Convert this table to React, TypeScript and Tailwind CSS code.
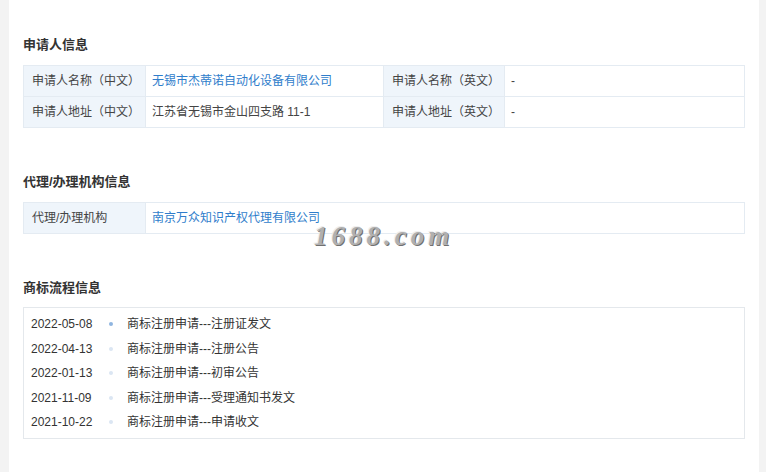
const font = '"Liberation Sans", "Noto Sans CJK SC", sans-serif';

const timeline = [
  { date: '2022-05-08', text: '商标注册申请---注册证发文', active: true },
  { date: '2022-04-13', text: '商标注册申请---注册公告' },
  { date: '2022-01-13', text: '商标注册申请---初审公告' },
  { date: '2021-11-09', text: '商标注册申请---受理通知书发文' },
  { date: '2021-10-22', text: '商标注册申请---申请收文' },
];

const SectionTitle = ({ children }: { children: React.ReactNode }) => (
  <h3 className="h-[20px] leading-[20px] text-[13px] font-bold text-[#333]">{children}</h3>
);

const Label = ({ children }: { children: React.ReactNode }) => (
  <td className="h-[31px] border border-[#e4ebf2] bg-[#eff5fb] pl-[8px] text-[#444]">{children}</td>
);

const Value = ({ children, link }: { children: React.ReactNode; link?: boolean }) => (
  <td className={`h-[31px] border border-[#e4ebf2] pl-[6px] ${link ? 'text-[#2f7dcb]' : 'text-[#444]'}`}>
    {children}
  </td>
);

const App = () => {
  return (
    <div className="flex h-[472px] w-[766px] bg-[#f3f3f3] pl-[9px] pr-[7px]" style={{ fontFamily: font }}>
      <div className="relative flex-1 bg-white px-[14px] pt-[35px] text-[12px]">
        {/* 申请人信息 */}
        <SectionTitle>申请人信息</SectionTitle>
        <table className="mt-[10px] w-full table-fixed border-collapse">
          <colgroup>
            <col className="w-[122px]" />
            <col className="w-[238px]" />
            <col className="w-[121px]" />
            <col />
          </colgroup>
          <tbody>
            <tr>
              <Label>申请人名称（中文）</Label>
              <Value link>无锡市杰蒂诺自动化设备有限公司</Value>
              <Label>申请人名称（英文）</Label>
              <Value>-</Value>
            </tr>
            <tr>
              <Label>申请人地址（中文）</Label>
              <Value>江苏省无锡市金山四支路 11-1</Value>
              <Label>申请人地址（英文）</Label>
              <Value>-</Value>
            </tr>
          </tbody>
        </table>

        {/* 代理/办理机构信息 */}
        <div className="mt-[44px]">
          <SectionTitle>代理/办理机构信息</SectionTitle>
        </div>
        <table className="mt-[10px] w-full table-fixed border-collapse">
          <colgroup>
            <col className="w-[122px]" />
            <col />
          </colgroup>
          <tbody>
            <tr>
              <Label>代理/办理机构</Label>
              <Value link>南京万众知识产权代理有限公司</Value>
            </tr>
          </tbody>
        </table>

        {/* 商标流程信息 */}
        <div className="mt-[44px]">
          <SectionTitle>商标流程信息</SectionTitle>
        </div>
        <div className="mt-[9px] border border-[#e4e8ec] pb-[3px] pl-[7px] pt-[4px]">
          {timeline.map((item) => (
            <div key={item.date} className="flex h-[24.5px] items-center text-[#333]">
              <span className="w-[73px]">{item.date}</span>
              <span className="flex w-[14px] justify-center">
                <span className={`h-[4px] w-[4px] rounded-full ${item.active ? 'bg-[#8fb5e0]' : 'bg-[#dbe6f3]'}`} />
              </span>
              <span className="ml-[9px]">{item.text}</span>
            </div>
          ))}
        </div>

        {/* watermark */}
        <div
          className="absolute left-[305px] top-[216px] select-none text-[27px] font-bold italic tracking-[4px] text-[#b0b0b0]"
          style={{ fontFamily: '"Liberation Serif", serif', textShadow: '1px 1px 0 #707070, -1px -1px 0 #eeeeee' }}
        >
          1688.com
        </div>
      </div>
    </div>
  );
};

export default App;
